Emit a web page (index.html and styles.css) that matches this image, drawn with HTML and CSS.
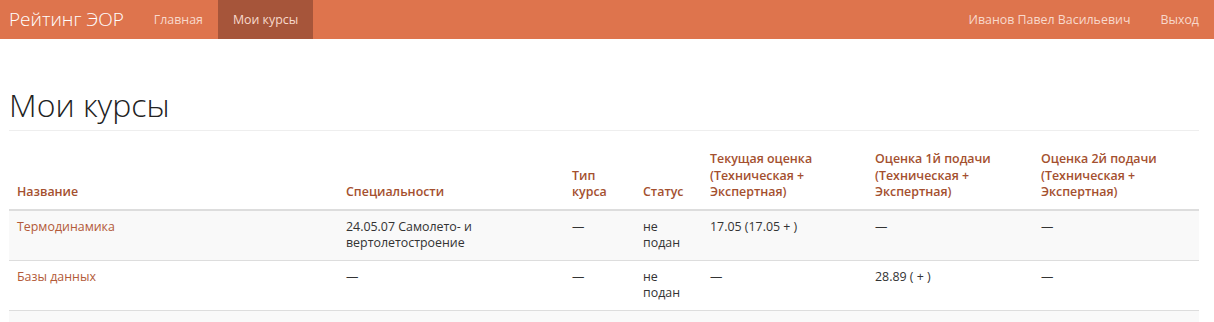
FILE: index.html
```html
<!DOCTYPE html>
<html lang="ru">
<head>
    <meta charset="UTF-8">
    <meta name="viewport" content="width=device-width, initial-scale=1.0">
    <title>Мои курсы — Рейтинг ЭОР</title>
    <link rel="stylesheet" href="styles.css">
</head>
<body>
    <nav class="navbar">
        <div class="navbar-left">
            <a class="brand" href="#">Рейтинг ЭОР</a>
            <a class="nav-link" href="#">Главная</a>
            <a class="nav-link active" href="#">Мои курсы</a>
        </div>
        <div class="navbar-right">
            <a class="nav-link" href="#">Иванов Павел Васильевич</a>
            <a class="nav-link" href="#">Выход</a>
        </div>
    </nav>

    <div class="container">
        <h1 class="page-header">Мои курсы</h1>

        <table class="courses">
            <colgroup>
                <col style="width: 329px">
                <col style="width: 226px">
                <col style="width: 71px">
                <col style="width: 67px">
                <col style="width: 165px">
                <col style="width: 166px">
                <col style="width: 166px">
            </colgroup>
            <thead>
                <tr>
                    <th>Название</th>
                    <th>Специальности</th>
                    <th>Тип курса</th>
                    <th>Статус</th>
                    <th>Текущая оценка (Техническая + Экспертная)</th>
                    <th>Оценка 1й подачи (Техническая + Экспертная)</th>
                    <th>Оценка 2й подачи (Техническая + Экспертная)</th>
                </tr>
            </thead>
            <tbody>
                <tr>
                    <td><a href="#">Термодинамика</a></td>
                    <td>24.05.07 Самолето- и вертолетостроение</td>
                    <td>—</td>
                    <td>не подан</td>
                    <td>17.05 (17.05 + )</td>
                    <td>—</td>
                    <td>—</td>
                </tr>
                <tr>
                    <td><a href="#">Базы данных</a></td>
                    <td>—</td>
                    <td>—</td>
                    <td>не подан</td>
                    <td>—</td>
                    <td>28.89 ( + )</td>
                    <td>—</td>
                </tr>
                <tr>
                    <td><a href="#">Сопротивление материалов (курс)</a></td>
                    <td>—</td>
                    <td>—</td>
                    <td>не подан</td>
                    <td>—</td>
                    <td>—</td>
                    <td>—</td>
                </tr>
            </tbody>
        </table>
    </div>
</body>
</html>
```

FILE: styles.css
```css
* {
    margin: 0;
    padding: 0;
    box-sizing: border-box;
}

body {
    font-family: "Open Sans", "Liberation Sans", sans-serif;
    font-size: 12.4px;
    line-height: 16.5px;
    color: #333;
    background: #fff;
}

a {
    text-decoration: none;
}

/* navbar */
.navbar {
    display: flex;
    justify-content: space-between;
    height: 39px;
    background: #de744d;
}

.navbar-left,
.navbar-right {
    display: flex;
}

.brand {
    padding: 0 15px 0 9px;
    font-size: 19px;
    font-weight: 300;
    line-height: 39px;
    color: #fff;
}

.nav-link {
    padding: 0 15px;
    font-size: 12.4px;
    line-height: 39px;
    color: #f8d9cc;
}

.nav-link.active {
    background: #a6553a;
}

/* content */
.container {
    padding: 0 15px 0 9px;
}

.page-header {
    margin-top: 48px;
    padding-bottom: 8px;
    border-bottom: 1px solid #eee;
    font-size: 32px;
    font-weight: 300;
    line-height: 1.1;
    color: #222;
}

.courses {
    width: 100%;
    margin-top: 12px;
    border-collapse: collapse;
    table-layout: fixed;
}

.courses th,
.courses td {
    padding: 8px;
    text-align: left;
    vertical-align: top;
}

.courses th {
    vertical-align: bottom;
    font-weight: 600;
    color: #a4502f;
    border-bottom: 2px solid #ddd;
}

.courses td {
    border-top: 1px solid #ddd;
}

.courses td a {
    color: #b35a38;
}

.courses tbody tr:nth-child(odd) {
    background: #f9f9f9;
}
```
